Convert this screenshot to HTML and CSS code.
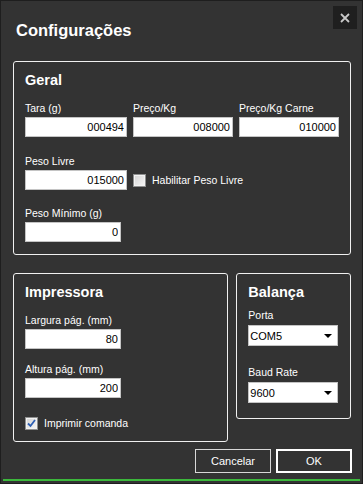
FILE: index.html
```html
<!DOCTYPE html>
<html lang="pt-BR">
<head>
    <meta charset="UTF-8">
    <title>Configurações</title>
    <link rel="stylesheet" href="styles.css">
</head>
<body>
    <div class="window">
        <div class="header">
            <h1 class="title">Configurações</h1>
            <div class="close-btn">
                <svg width="10" height="10" viewBox="0 0 10 10">
                    <path d="M1 1 L9 9 M9 1 L1 9" stroke="#c8c8c8" stroke-width="1.8" fill="none"/>
                </svg>
            </div>
        </div>

        <div class="main">
            <!-- Geral -->
            <div class="group group-geral">
                <div class="group-title">Geral</div>
                <div class="row row-first">
                    <div class="field">
                        <label class="label">Tara (g)</label>
                        <input class="input w-tara" type="text" value="000494">
                    </div>
                    <div class="field">
                        <label class="label">Preço/Kg</label>
                        <input class="input w-preco" type="text" value="008000">
                    </div>
                    <div class="field">
                        <label class="label">Preço/Kg Carne</label>
                        <input class="input w-preco" type="text" value="010000">
                    </div>
                </div>
                <div class="field row-next">
                    <label class="label">Peso Livre</label>
                    <div class="field-line">
                        <input class="input w-tara" type="text" value="015000">
                        <span class="check">
                            <span class="check-box"></span>
                            <span class="check-text">Habilitar Peso Livre</span>
                        </span>
                    </div>
                </div>
                <div class="field row-last">
                    <label class="label">Peso Mínimo (g)</label>
                    <input class="input w-small" type="text" value="0">
                </div>
            </div>

            <div class="bottom-row">
                <!-- Impressora -->
                <div class="group group-impressora">
                    <div class="group-title">Impressora</div>
                    <div class="field row-first">
                        <label class="label">Largura pág. (mm)</label>
                        <input class="input w-small" type="text" value="80">
                    </div>
                    <div class="field row-alt">
                        <label class="label">Altura pág. (mm)</label>
                        <input class="input w-small" type="text" value="200">
                    </div>
                    <span class="check row-check">
                        <span class="check-box checked">
                            <svg width="9" height="9" viewBox="0 0 9 9">
                                <path d="M1 4.5 L3.5 7 L8 1" stroke="#2d5fb4" stroke-width="1.8" fill="none"/>
                            </svg>
                        </span>
                        <span class="check-text">Imprimir comanda</span>
                    </span>
                </div>

                <!-- Balança -->
                <div class="group group-balanca">
                    <div class="group-title">Balança</div>
                    <div class="field row-porta">
                        <label class="label">Porta</label>
                        <div class="select">
                            <span>COM5</span>
                            <span class="arrow"></span>
                        </div>
                    </div>
                    <div class="field row-baud">
                        <label class="label">Baud Rate</label>
                        <div class="select">
                            <span>9600</span>
                            <span class="arrow"></span>
                        </div>
                    </div>
                </div>
            </div>
        </div>

        <div class="footer">
            <button class="btn">Cancelar</button>
            <button class="btn btn-ok">OK</button>
        </div>

        <div class="status"></div>
    </div>
</body>
</html>
```

FILE: styles.css
```css
* {
    margin: 0;
    padding: 0;
    box-sizing: border-box;
}

body {
    background: #333;
    font-family: "Liberation Sans", Arial, sans-serif;
}

.window {
    width: 363px;
    height: 484px;
    border: 1px solid #1e1e1e;
    background: #333;
    color: #fff;
    display: flex;
    flex-direction: column;
}

.header {
    height: 60px;
    padding: 5px 5px 0 15px;
    display: flex;
    justify-content: space-between;
    align-items: flex-start;
}

.title {
    margin-top: 14px;
    font-size: 16.5px;
    line-height: 20px;
    font-weight: bold;
}

.close-btn {
    width: 24px;
    height: 23px;
    background: #1f1f1f;
    display: flex;
    align-items: center;
    justify-content: center;
}

.main {
    padding: 0 11px 0 12px;
    display: flex;
    flex-direction: column;
    gap: 18px;
}

.group {
    border: 1px solid #f0f0f0;
    border-radius: 3px;
    padding: 9px 10px 0 11px;
}

.group-geral {
    padding-bottom: 12px;
}

.group-title {
    font-size: 14.5px;
    line-height: 18px;
    font-weight: bold;
}

.row {
    display: flex;
    gap: 6px;
}

.field {
    display: flex;
    flex-direction: column;
    align-items: flex-start;
}

.label {
    font-size: 10.5px;
    line-height: 13px;
    margin-bottom: 2px;
    color: #fff;
}

.row-first {
    margin-top: 13px;
}

.row-next {
    margin-top: 18px;
}

.row-last {
    margin-top: 17px;
}

.row-alt {
    margin-top: 14px;
}

.row-check {
    margin-top: 18px;
}

.field-line {
    display: flex;
    align-items: center;
    gap: 6px;
}

.input {
    height: 20px;
    border: 1px solid #c4c4c4;
    background: #fff;
    color: #000;
    font-family: "Liberation Sans", Arial, sans-serif;
    font-size: 11px;
    text-align: right;
    padding: 0 2px;
    outline: none;
}

.w-tara {
    width: 102px;
}

.w-preco {
    width: 100px;
}

.w-small {
    width: 96px;
}

.check {
    display: flex;
    align-items: center;
    gap: 6px;
    height: 15px;
}

.check-box {
    width: 13px;
    height: 13px;
    border: 1px solid #8e8f8f;
    background: linear-gradient(135deg, #d4d4d4, #f6f6f6);
    box-shadow: inset 0 0 0 1px #f2f2f2;
    display: flex;
    align-items: center;
    justify-content: center;
}

.check-text {
    font-size: 10.5px;
    line-height: 13px;
}

.bottom-row {
    display: flex;
    align-items: flex-start;
    gap: 8px;
}

.group-impressora {
    width: 216px;
    padding-bottom: 10px;
}

.group-balanca {
    width: 115px;
    padding-bottom: 15px;
}

.row-porta {
    margin-top: 8px;
}

.row-baud {
    margin-top: 20px;
}

.row-porta .label,
.row-baud .label {
    margin-bottom: 3px;
}

.select {
    width: 90px;
    height: 21px;
    background: #fff;
    border: 1px solid #c4c4c4;
    color: #000;
    font-size: 11px;
    padding: 0 5px 0 1px;
    display: flex;
    align-items: center;
    justify-content: space-between;
}

.arrow {
    width: 0;
    height: 0;
    border-left: 4px solid transparent;
    border-right: 4px solid transparent;
    border-top: 4px solid #000;
}

.footer {
    margin-top: 7px;
    padding-right: 10px;
    display: flex;
    justify-content: flex-end;
    gap: 5px;
}

.btn {
    width: 76px;
    height: 24px;
    background: #333;
    border: 1px solid #d8d8d8;
    color: #fff;
    font-family: "Liberation Sans", Arial, sans-serif;
    font-size: 11px;
}

.btn-ok {
    border: 2px solid #fff;
}

.status {
    height: 2px;
    margin: 6px 2px 0;
    background: #3cb83c;
}
```
